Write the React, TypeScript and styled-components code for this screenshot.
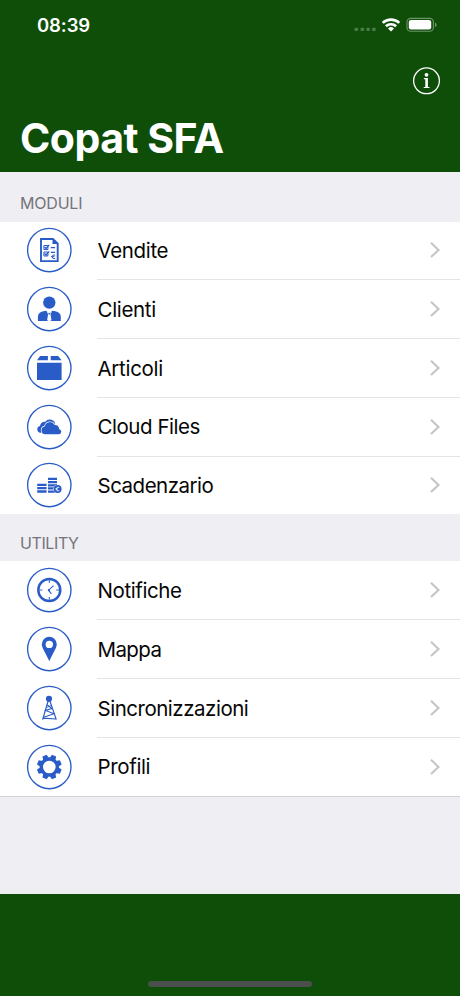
import React from 'react';
import styled, { createGlobalStyle } from 'styled-components';

const GREEN = '#0f4e08';
const BLUE = '#2a5cc8';

const GlobalStyle = createGlobalStyle`
  * { box-sizing: border-box; }
  body { margin: 0; background: #efeff4; }
`;

const Screen = styled.div`
  width: 460px;
  height: 996px;
  display: flex;
  flex-direction: column;
  overflow: hidden;
  background: #efeef3;
  font-family: Inter, 'Liberation Sans', sans-serif;
  color: #060606;
`;

const Header = styled.header`
  height: 172px;
  flex: none;
  display: flex;
  flex-direction: column;
  background: ${GREEN};
  color: #fff;
`;

const StatusBar = styled.div`
  height: 50px;
  display: flex;
  align-items: center;
  justify-content: space-between;
  padding: 0 23px 0 37px;
`;

const Clock = styled.span`
  font-size: 18.5px;
  font-weight: 600;
  letter-spacing: -0.1px;
`;

const NavBar = styled.div`
  height: 62px;
  display: flex;
  justify-content: flex-end;
  padding: 16px 19px 0 0;
`;

const InfoButton = styled.button`
  width: 29px;
  height: 29px;
  padding: 0;
  border: 0;
  background: none;
`;

const Title = styled.h1`
  margin: 0;
  padding-left: 20px;
  font-size: 41px;
  line-height: 52px;
  font-weight: 700;
  letter-spacing: -0.5px;
`;

const SectionTitle = styled.h2<{ $height: number; $spacing: number }>`
  height: ${(p) => p.$height}px;
  margin: 0;
  flex: none;
  display: flex;
  align-items: flex-end;
  padding: 0 0 8.8px 20px;
  font-size: 16px;
  line-height: 20px;
  font-weight: 400;
  letter-spacing: ${(p) => p.$spacing}px;
  color: #74747a;
`;

const List = styled.ul<{ $height: number; $closed?: boolean }>`
  height: ${(p) => p.$height}px;
  list-style: none;
  margin: 0;
  padding: 0;
  flex: none;
  background: #fff;
  box-shadow: ${(p) => (p.$closed ? '0 1px #d2d2d5' : 'none')};
`;

const Row = styled.li`
  height: 58.75px;
  display: flex;
  padding-left: 25px;

  &:last-child > div { border-bottom-color: transparent; }
`;

const RowIcon = styled.svg`
  width: 48px;
  height: 48px;
  margin-top: 4.8px;
  flex: none;
  color: ${BLUE};
`;

const RowBody = styled.div`
  flex: 1;
  margin-left: 24px;
  padding: 0 19px 0 0.5px;
  display: flex;
  align-items: center;
  justify-content: space-between;
  border-bottom: 1px solid #e4e4e6;
`;

const Label = styled.span<{ $spacing: number }>`
  padding-top: 1.4px;
  font-size: 20.5px;
  line-height: 26px;
  letter-spacing: ${(p) => p.$spacing}px;
`;

const Footer = styled.footer`
  height: 102px;
  margin-top: auto;
  flex: none;
  display: flex;
  justify-content: center;
  align-items: flex-end;
  padding-bottom: 9px;
  background: ${GREEN};
`;

const HomeIndicator = styled.div`
  width: 164px;
  height: 6px;
  border-radius: 3px;
  background: #4b4f4b;
`;

const StatusIcons = () => (
  <svg width="84" height="18" viewBox="353 16 84 18">
    <g fill="#4a7b46">
      <rect x="354.5" y="27.7" width="3.6" height="3.2" rx="1" />
      <rect x="360.5" y="27.7" width="3.6" height="3.2" rx="1" />
      <rect x="366.3" y="27.7" width="3.6" height="3.2" rx="1" />
      <rect x="372.1" y="27.7" width="3.6" height="3.2" rx="1" />
    </g>
    <g fill="none" stroke="#fff" strokeWidth="2.7">
      <path d="M382.7 22.9a12 12 0 0 1 16.6 0" />
      <path d="M385.9 26.3a7.4 7.4 0 0 1 10.2 0" />
    </g>
    <path d="M388 28.5a4.4 4.4 0 0 1 6 0l-3 3z" fill="#fff" />
    <rect x="407" y="18.4" width="26.4" height="12.9" rx="3.7" fill="none" stroke="#6d956a" strokeWidth="1.1" />
    <rect x="408.8" y="20.1" width="22.4" height="9.4" rx="2.2" fill="#fff" />
    <path d="M435 22.6q1.7.9 1.7 2.3t-1.7 2.3z" fill="#6d956a" />
  </svg>
);

const InfoIcon = () => (
  <svg width="29" height="29" viewBox="-14.5 -14.8 29 29">
    <circle r="12.9" fill="none" stroke="#fff" strokeWidth="1.3" />
    <circle cx="0" cy="-6" r="1.9" fill="#fff" />
    <path d="M-2.6-2.7H1.4V6.1H3V7.2H-2.8V6.1H-1.2V-1.6H-2.6z" fill="#fff" />
  </svg>
);

const Chevron = () => (
  <svg width="12" height="18" viewBox="0 0 12 18">
    <path d="M2 1.7l7.5 7.2L2 16.1" fill="none" stroke="#c5c5c9" strokeWidth="2.1" />
  </svg>
);

const InvoiceGlyph = () => (
  <g fill="none" stroke="currentColor">
    <path d="M-8.3-11H3.6L8.4-6.3V11.1H-8.3z" strokeWidth="1.9" />
    <path d="M3.2-12L9.3-6H3.2z" fill="currentColor" stroke="none" />
    <path d="M-5.4-4.5h4v4h-4zM-5.4 2h4v4h-4z" strokeWidth="1" />
    <path d="M-4.7-3l1.4 1.5L-.1-5.2M-4.7 3.5l1.4 1.5L-.1 1.3" strokeWidth="1.2" />
    <path d="M1.5-2.3h4.3M1.5 2.4h4.3" strokeWidth="1.2" />
    <path d="M5.9 5.1q-3-.8-3.1 1.6 0 2.4 3.1 1.8M1.7 6.7h3.4" strokeWidth="1" />
  </g>
);

const PersonGlyph = () => (
  <g fill="currentColor">
    <circle cy="-6.4" r="6.2" />
    <path d="M-11.4 12V8Q-11.3 3.2-6 2.3L-3.2 1.7-.2 4.4 3.2 1.7 6 2.3Q11.4 3.2 11.5 8v4z" />
    <path d="M-1.2 5.2L-2.2 11.2 0 12.2 2.2 11.2 1.2 5.2 2.6 2.6 0 4.2-2.6 2.6z" fill="#fff" />
    <path d="M-1 3.9H1L.6 5.4H-.6z" />
  </g>
);

const BoxGlyph = () => (
  <path
    fill="currentColor"
    d="M-12.3-5.2H12.3V12.1H-12.3zM-9.2-12H-1.4V-7.7H-12.3zM1.4-12H8.8L12.3-7.7H1.4z"
  />
);

const CloudGlyph = () => (
  <g fill="currentColor">
    <path d="M-6.5 5.8H-8.8a3.5 3.5 0 0 1-.5-6.9A4.7 4.7 0 0 1-4-5.3a5.7 5.7 0 0 1 10.1 3.1L-5 5.8z" />
    <path
      d="M-4.2 7.3A4 4 0 0 1-4.6-.6 5.4 5.4 0 0 1 5.4-2.1a4.5 4.5 0 0 1 4.5 4.3A2.6 2.6 0 0 1 9.8 7.3z"
      stroke="#fff"
      strokeWidth="1.4"
      paintOrder="stroke"
    />
  </g>
);

const CoinsGlyph = () => (
  <g>
    <path
      d="M-12.1-.1h9.4M-12.1 3.2h9.4M-12.1 6.5h9.4M-1.3-6.1h9M-1.3-2.9h9M-1.3.3h9M-1.3 3.4h7M-1.3 6.6h7"
      stroke="currentColor"
      strokeWidth="2.3"
    />
    <circle cx="8.3" cy="4" r="4" fill="currentColor" stroke="#fff" strokeWidth="1" paintOrder="stroke" />
    <path d="M10 2.4q-2.8-1-3 1.6.1 2.7 3 1.7M5.9 4h2.8" fill="none" stroke="#fff" strokeWidth=".8" />
  </g>
);

const ClockGlyph = () => (
  <g fill="none" stroke="currentColor">
    <circle r="11" strokeWidth="2.5" />
    <path d="M0-9.8v2.9M0 6.9v2.9M-9.8 0h2.9M6.9 0h2.9" strokeWidth="1" />
    <path d="M4.2-4.4L-.7.2 2.1 3.8" strokeWidth="1.1" />
    <circle cx="-.4" cy=".2" r="1.1" fill="currentColor" stroke="none" />
  </g>
);

const PinGlyph = () => (
  <path
    fill="currentColor"
    fillRule="evenodd"
    d="M0-12.3a7.5 7.5 0 0 1 7.5 7.5C7.5-1 3.2 4.5 0 12.2-3.2 4.5-7.5-1-7.5-4.8A7.5 7.5 0 0 1 0-12.3zM0-8.3a3.7 3.7 0 1 0 0 7.4 3.7 3.7 0 0 0 0-7.4z"
  />
);

const TowerGlyph = () => (
  <g fill="none" stroke="currentColor" strokeWidth="1.2">
    <circle cx="-.3" cy="-9.2" r="3.1" fill="currentColor" stroke="none" />
    <path d="M-1.2-7L-6.7 11.6M.6-7L7 11.6M-6 10.2L6.7 11" />
    <path d="M-2.2-3.2L2.6.6-3.8 2.4 4.6 5.8-5.6 9.2" strokeWidth="1.1" />
    <path d="M-2.4-.6L1.8-2.4" strokeWidth=".8" />
  </g>
);

const TEETH = [22.5, 67.5, 112.5, 157.5, 202.5, 247.5, 292.5, 337.5];

const GearGlyph = () => (
  <g>
    <circle r="8" fill="none" stroke="currentColor" strokeWidth="3.4" />
    {TEETH.map((angle) => (
      <path key={angle} d="M-3.1-8.3L-2.3-12.4H2.3L3.1-8.3z" fill="currentColor" transform={`rotate(${angle})`} />
    ))}
  </g>
);

type Item = { label: string; Glyph: React.FC; spacing: number };

const MODULES: Item[] = [
  { label: 'Vendite', Glyph: InvoiceGlyph, spacing: -0.36 },
  { label: 'Clienti', Glyph: PersonGlyph, spacing: -0.32 },
  { label: 'Articoli', Glyph: BoxGlyph, spacing: -0.3 },
  { label: 'Cloud Files', Glyph: CloudGlyph, spacing: -0.46 },
  { label: 'Scadenzario', Glyph: CoinsGlyph, spacing: -0.5 },
];

const UTILITIES: Item[] = [
  { label: 'Notifiche', Glyph: ClockGlyph, spacing: -0.42 },
  { label: 'Mappa', Glyph: PinGlyph, spacing: -0.6 },
  { label: 'Sincronizzazioni', Glyph: TowerGlyph, spacing: -0.48 },
  { label: 'Profili', Glyph: GearGlyph, spacing: -0.36 },
];

const MenuRow = ({ label, Glyph, spacing }: Item) => (
  <Row>
    <RowIcon viewBox="-24.3 -24 48 48">
      <circle r="21.7" fill="none" stroke="currentColor" strokeWidth="1.35" />
      <Glyph />
    </RowIcon>
    <RowBody>
      <Label $spacing={spacing}>{label}</Label>
      <Chevron />
    </RowBody>
  </Row>
);

export default function App() {
  return (
    <>
      <GlobalStyle />
      <Screen>
        <Header>
          <StatusBar>
            <Clock>08:39</Clock>
            <StatusIcons />
          </StatusBar>
          <NavBar>
            <InfoButton aria-label="Info">
              <InfoIcon />
            </InfoButton>
          </NavBar>
          <Title>Copat SFA</Title>
        </Header>
        <SectionTitle $height={49.6} $spacing={-0.2}>MODULI</SectionTitle>
        <List $height={292.8}>
          {MODULES.map((item) => (
            <MenuRow key={item.label} {...item} />
          ))}
        </List>
        <SectionTitle $height={47.1} $spacing={-0.4}>UTILITY</SectionTitle>
        <List $height={234.7} $closed>
          {UTILITIES.map((item) => (
            <MenuRow key={item.label} {...item} />
          ))}
        </List>
        <Footer>
          <HomeIndicator />
        </Footer>
      </Screen>
    </>
  );
}
